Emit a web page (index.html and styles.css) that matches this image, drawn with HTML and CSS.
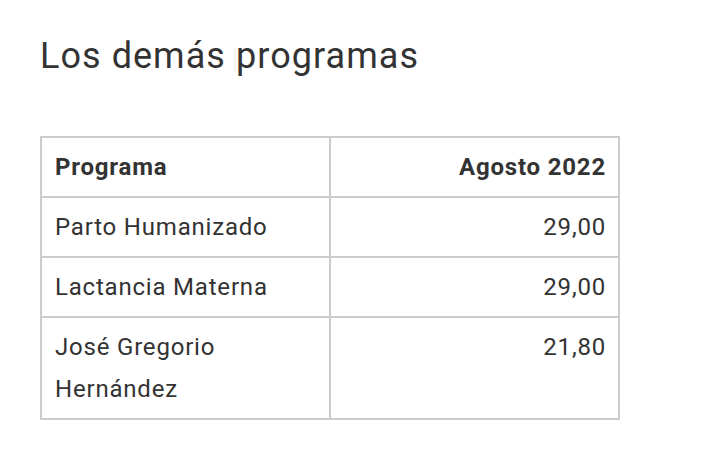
FILE: index.html
```html
<!DOCTYPE html>
<html lang="es">
<head>
<meta charset="utf-8">
<link rel="stylesheet" href="styles.css">
</head>
<body>
<main class="page">
  <h2 class="title">Los demás programas</h2>
  <table class="data">
    <thead>
      <tr><th class="name">Programa</th><th class="num">Agosto 2022</th></tr>
    </thead>
    <tbody>
      <tr><td class="name">Parto Humanizado</td><td class="num">29,00</td></tr>
      <tr><td class="name">Lactancia Materna</td><td class="num">29,00</td></tr>
      <tr><td class="name">José Gregorio Hernández</td><td class="num">21,80</td></tr>
    </tbody>
  </table>
</main>
</body>
</html>
```

FILE: styles.css
```css
html, body {
  margin: 0;
  background: #fff;
}
.page {
  padding: 28px 40px 0 40px;
  font-family: Roboto, "Liberation Sans", sans-serif;
  color: #333;
}
.title {
  margin: 0 0 52px 0;
  font-size: 36px;
  font-weight: 400;
  line-height: 56px;
  letter-spacing: 1.05px;
}
.data {
  border-collapse: collapse;
  width: 580px;
  table-layout: fixed;
  font-size: 24px;
  line-height: 42px;
  letter-spacing: 0.8px;
}
.data th, .data td {
  border: 2px solid #ccc;
  padding: 8px 12px 8px 13px;
  vertical-align: top;
}
.data th {
  font-weight: 700;
}
.name { text-align: left; }
.num { text-align: right; }
```
